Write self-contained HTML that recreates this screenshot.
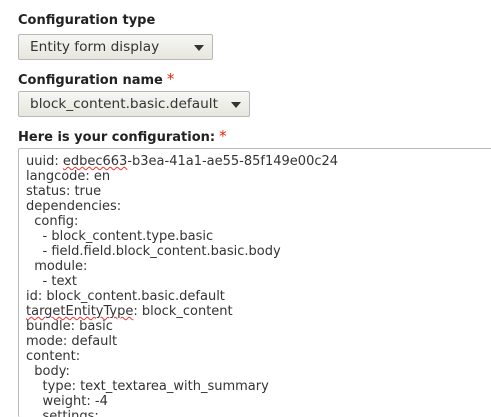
<!DOCTYPE html><html style="overflow:hidden;height:417px"><head><style>
body{margin:0;width:491px;height:417px;overflow:hidden;background:#fff;font-family:"DejaVu Sans",sans-serif;color:#222;position:relative}
.l{position:absolute;left:18px;font-weight:bold;font-size:13px;color:#222}
.l b{color:#e32700;font-weight:normal;font-size:15px;margin-left:4px}
.s{position:absolute;left:18px;height:24px;border:1px solid #b8b8b8;border-radius:2px;background:linear-gradient(#f6f6f3,#e7e7df);font-size:13.7px;line-height:24px;padding-left:11px;box-sizing:content-box;color:#333}
.s:after{content:"";position:absolute;right:8px;top:10px;border-left:5px solid transparent;border-right:5px solid transparent;border-top:6px solid #333}
.t{position:absolute;left:18px;top:148px;width:500px;height:269px;border:1px solid #b8b8b8;border-bottom:none;border-radius:2px;padding:5px 7px 0;font-size:13px;line-height:15px;white-space:pre;color:#333;box-sizing:border-box;overflow:hidden}
u{text-decoration:underline wavy #e33;text-decoration-thickness:1px}
</style></head><body>
<div class="l" style="top:13px">Configuration type</div>
<div class="s" style="top:34px;width:182px">Entity form display</div>
<div class="l" style="top:70px">Configuration name<b>*</b></div>
<div class="s" style="top:91px;width:219px">block_content.basic.default</div>
<div class="l" style="top:127px">Here is your configuration:<b>*</b></div>
<div class="t">uuid: <u>edbec663</u>-b3ea-41a1-ae55-85f149e00c24
langcode: en
status: true
dependencies:
  config:
    - block_content.type.basic
    - field.field.block_content.basic.body
  module:
    - text
id: block_content.basic.default
<u>targetEntityType</u>: block_content
bundle: basic
mode: default
content:
  body:
    type: text_textarea_with_summary
    weight: -4
    settings:</div>
</body></html>
